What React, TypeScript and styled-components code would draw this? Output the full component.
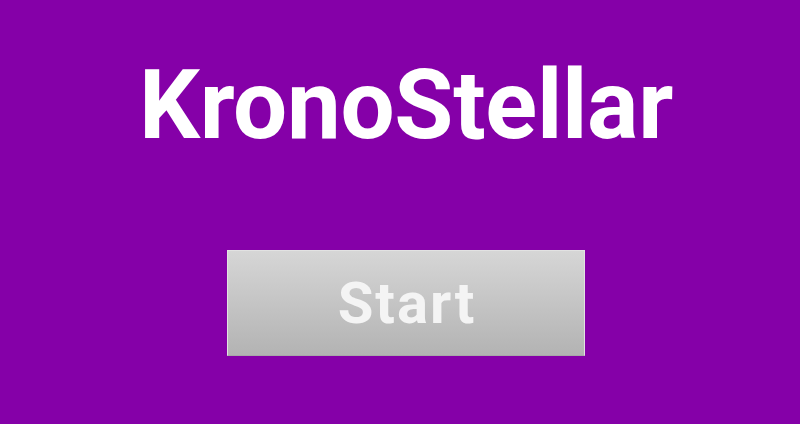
import styled, { createGlobalStyle } from 'styled-components';

const GlobalStyle = createGlobalStyle`
  html, body {
    margin: 0;
    padding: 0;
    background-color: #8500a8;
  }
`;

const Screen = styled.div`
  width: 800px;
  height: 424px;
  box-sizing: border-box;
  padding-left: 12px;
  background-color: #8500a8;
  display: flex;
  flex-direction: column;
  align-items: center;
  font-family: Roboto, 'Liberation Sans', sans-serif;
`;

const Title = styled.h1`
  margin: 0;
  margin-top: 49px;
  color: #ffffff;
  font-size: 96px;
  font-weight: 700;
  line-height: 112px;
  letter-spacing: -0.3px;
`;

const StartButton = styled.button`
  margin-top: 89px;
  width: 358px;
  height: 106px;
  border: 1px solid #e2e2e2;
  border-bottom-color: #a8a8a8;
  border-radius: 0;
  background: linear-gradient(to bottom, #d6d6d6, #b3b3b3);
  color: #f4f4f4;
  font-family: Roboto, 'Liberation Sans', sans-serif;
  font-size: 58px;
  font-weight: 700;
  letter-spacing: 2px;
  padding: 0 0 0 2px;
  cursor: pointer;
`;

const App = () => {
  return (
    <>
      <GlobalStyle />
      <Screen>
        <Title>KronoStellar</Title>
        <StartButton>Start</StartButton>
      </Screen>
    </>
  );
};

export default App;
